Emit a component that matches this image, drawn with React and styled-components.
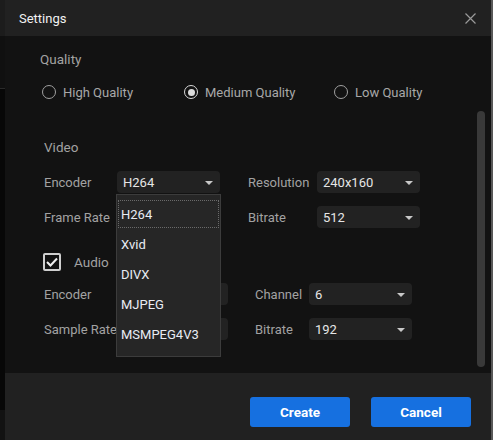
import styled, { createGlobalStyle } from "styled-components";

const GlobalStyle = createGlobalStyle`
  html, body {
    margin: 0;
    padding: 0;
    background: #080808;
  }
  body {
    font-family: Roboto, "Liberation Sans", sans-serif;
    font-size: 13px;
  }
`;

const Page = styled.div`
  display: flex;
  width: 493px;
  height: 440px;
  overflow: hidden;
`;

const Backdrop = styled.div`
  width: 5px;
  display: flex;
  flex-direction: column;
`;

const BackdropPart = styled.div`
  height: ${(p) => p.h || "auto"};
  flex: ${(p) => (p.h ? "none" : "1")};
  background: ${(p) => p.bg};
  border-bottom: ${(p) => (p.line ? "1px solid #2a2a2a" : "none")};
`;

const Dialog = styled.div`
  width: 486px;
  display: flex;
  flex-direction: column;
  border-right: 2px solid #585858;
`;

const Header = styled.div`
  height: 36px;
  flex: none;
  background: #212121;
  display: flex;
  align-items: center;
  justify-content: space-between;
  padding: 0 15px 0 14px;
`;

const Title = styled.div`
  color: #f2f2f2;
  font-size: 13px;
`;

const Close = styled.button`
  border: 0;
  background: none;
  padding: 0;
  width: 12px;
  height: 12px;
  display: flex;
  align-items: center;
  justify-content: center;
`;

const Body = styled.div`
  flex: 1;
  background: #121212;
  display: flex;
`;

const Content = styled.div`
  flex: 1;
  padding: 15px 0 0 35px;
  position: relative;
`;

const Track = styled.div`
  width: 8px;
  padding: 75px 6px 6px 0;
  display: flex;
`;

const Thumb = styled.div`
  flex: 1;
  background: #393939;
  border-radius: 4px;
`;

const Heading = styled.div`
  color: #a2a2a2;
  font-size: 13.5px;
  line-height: 16px;
  margin-left: ${(p) => p.indent || 0}px;
  margin-top: ${(p) => p.top || 0}px;
`;

const RadioRow = styled.div`
  display: flex;
  margin-top: 17px;
  padding-left: 2px;
  height: 16px;
  align-items: center;
`;

const RadioItem = styled.label`
  display: flex;
  align-items: center;
  gap: 7px;
  width: ${(p) => p.w}px;
  color: #a8a8a8;
  font-size: 13px;
`;

const RadioCircle = styled.span`
  box-sizing: border-box;
  width: 14px;
  height: 14px;
  border-radius: 50%;
  border: 1.5px solid ${(p) => (p.on ? "#d8d8d8" : "#a0a0a0")};
  display: flex;
  align-items: center;
  justify-content: center;
  &::after {
    content: "";
    display: ${(p) => (p.on ? "block" : "none")};
    width: 7px;
    height: 7px;
    border-radius: 50%;
    background: #dcdcdc;
  }
`;

const Grid = styled.div`
  display: grid;
  grid-template-columns: ${(p) => p.cols};
  row-gap: 13px;
  align-items: center;
  margin-left: 4px;
  margin-top: ${(p) => p.top}px;
`;

const Label = styled.div`
  color: #a2a2a2;
  font-size: 13px;
  white-space: nowrap;
`;

const SelectBox = styled.div`
  height: 22px;
  border-radius: 4px;
  background: #222222;
  display: flex;
  align-items: center;
  justify-content: space-between;
  padding: 0 6px 0 6px;
  color: #e6e6e6;
  font-size: 13px;
`;

const Caret = styled.span`
  width: 0;
  height: 0;
  border-left: 4px solid transparent;
  border-right: 4px solid transparent;
  border-top: 4px solid #c8c8c8;
  margin-right: 1px;
  margin-top: 1px;
`;

const CheckRow = styled.div`
  display: flex;
  align-items: center;
  gap: 13px;
  margin: 25px 0 0 3px;
`;

const CheckBox = styled.span`
  box-sizing: border-box;
  width: 18px;
  height: 18px;
  border: 2px solid #cfcfcf;
  border-radius: 2px;
  display: flex;
  align-items: center;
  justify-content: center;
`;

const Menu = styled.div`
  position: absolute;
  left: 111px;
  top: 158px;
  width: 103px;
  padding: 4px 0 7px;
  background: #262626;
  border: 1px solid #3c3c3c;
`;

const MenuItem = styled.div`
  height: 30px;
  display: flex;
  align-items: center;
  padding-left: 4px;
  color: #e8ecf4;
  font-size: 13px;
  outline: ${(p) => (p.focus ? "1px dotted #6a6a6a" : "none")};
  outline-offset: -2px;
`;

const Footer = styled.div`
  height: 67px;
  flex: none;
  background: #212121;
  display: flex;
  align-items: center;
  justify-content: flex-end;
  gap: 21px;
  padding-right: 20px;
  padding-top: 11px;
  box-sizing: border-box;
`;

const Button = styled.button`
  width: 100px;
  height: 30px;
  border: 0;
  border-radius: 3px;
  background: #1670e0;
  color: #ffffff;
  font-family: Roboto, "Liberation Sans", sans-serif;
  font-weight: 700;
  font-size: 13.5px;
`;

function Select({ value }) {
  return (
    <SelectBox>
      <span>{value}</span>
      <Caret />
    </SelectBox>
  );
}

const qualities = [
  { name: "High Quality", w: 142 },
  { name: "Medium Quality", w: 150, on: true },
  { name: "Low Quality", w: 100 },
];

const codecs = ["H264", "Xvid", "DIVX", "MJPEG", "MSMPEG4V3"];

export default function App() {
  return (
    <Page>
      <GlobalStyle />
      <Backdrop>
        <BackdropPart h="36px" bg="#1c1c1c" />
        <BackdropPart h="52px" bg="#101010" line />
        <BackdropPart bg="#070707" />
        <BackdropPart h="30px" bg="#121212" />
      </Backdrop>
      <Dialog>
        <Header>
          <Title>Settings</Title>
          <Close aria-label="close">
            <svg width="11" height="11" viewBox="0 0 11 11">
              <path d="M0.5 0.5 L10.5 10.5 M10.5 0.5 L0.5 10.5" stroke="#9a9a9a" strokeWidth="1.2" />
            </svg>
          </Close>
        </Header>
        <Body>
          <Content>
            <Heading>Quality</Heading>
            <RadioRow>
              {qualities.map((q) => (
                <RadioItem key={q.name} w={q.w}>
                  <RadioCircle on={q.on} />
                  {q.name}
                </RadioItem>
              ))}
            </RadioRow>
            <Heading indent={4} top={39}>Video</Heading>
            <Grid cols="73px 103px 28px 69px 103px" top={16}>
              <Label>Encoder</Label>
              <Select value="H264" />
              <span />
              <Label>Resolution</Label>
              <Select value="240x160" />
              <Label>Frame Rate</Label>
              <Select value="30" />
              <span />
              <Label>Bitrate</Label>
              <Select value="512" />
            </Grid>
            <CheckRow>
              <CheckBox>
                <svg width="12" height="10" viewBox="0 0 12 10">
                  <path d="M1 5 L4.5 8.5 L11 1.5" fill="none" stroke="#f0f0f0" strokeWidth="2" />
                </svg>
              </CheckBox>
              <Heading>Audio</Heading>
            </CheckRow>
            <Grid cols="81px 103px 27px 54px 103px" top={12}>
              <Label>Encoder</Label>
              <Select value="AAC" />
              <span />
              <Label>Channel</Label>
              <Select value="6" />
              <Label>Sample Rate</Label>
              <Select value="44100" />
              <span />
              <Label>Bitrate</Label>
              <Select value="192" />
            </Grid>
            <Menu>
              {codecs.map((c, i) => (
                <MenuItem key={c} focus={i === 0}>
                  {c}
                </MenuItem>
              ))}
            </Menu>
          </Content>
          <Track>
            <Thumb />
          </Track>
        </Body>
        <Footer>
          <Button>Create</Button>
          <Button>Cancel</Button>
        </Footer>
      </Dialog>
    </Page>
  );
}
